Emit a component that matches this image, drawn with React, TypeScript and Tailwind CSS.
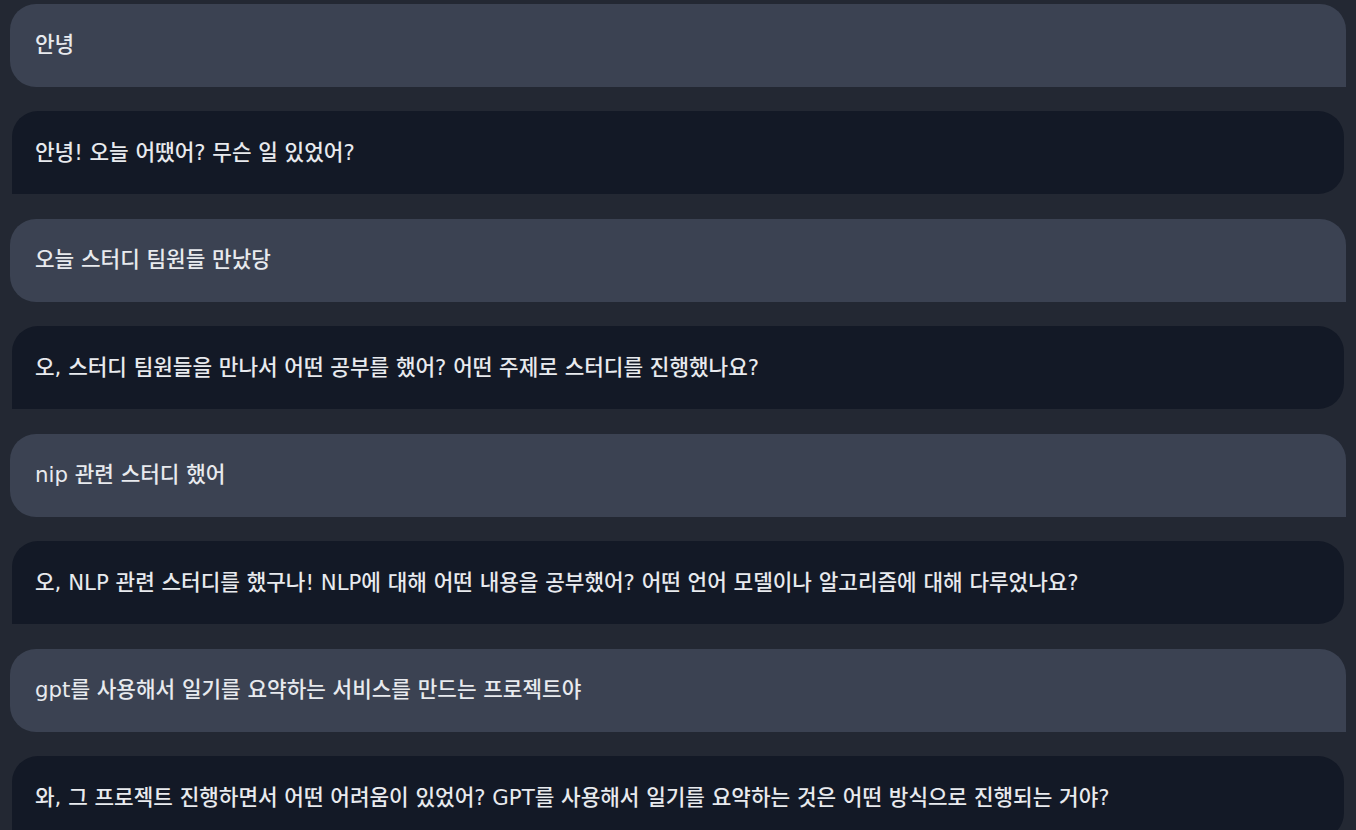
type Message = { role: 'user' | 'assistant'; text: string }

const messages: Message[] = [
  { role: 'user', text: '안녕' },
  { role: 'assistant', text: '안녕! 오늘 어땠어? 무슨 일 있었어?' },
  { role: 'user', text: '오늘 스터디 팀원들 만났당' },
  { role: 'assistant', text: '오, 스터디 팀원들을 만나서 어떤 공부를 했어? 어떤 주제로 스터디를 진행했나요?' },
  { role: 'user', text: 'nip 관련 스터디 했어' },
  {
    role: 'assistant',
    text: '오, NLP 관련 스터디를 했구나! NLP에 대해 어떤 내용을 공부했어? 어떤 언어 모델이나 알고리즘에 대해 다루었나요?',
  },
  { role: 'user', text: 'gpt를 사용해서 일기를 요약하는 서비스를 만드는 프로젝트야' },
  {
    role: 'assistant',
    text: '와, 그 프로젝트 진행하면서 어떤 어려움이 있었어? GPT를 사용해서 일기를 요약하는 것은 어떤 방식으로 진행되는 거야?',
  },
]

function Bubble({ role, text }: Message) {
  const base = 'flex h-[83px] shrink-0 items-center text-[21.3px] font-medium leading-none text-[#e8eaee]'
  if (role === 'user') {
    return (
      <div className={`${base} mx-[10px] rounded-[26px] rounded-br-none bg-[#3b4252] pl-[25px]`}>
        <span>{text}</span>
      </div>
    )
  }
  return (
    <div className={`${base} mx-[12px] rounded-[26px] rounded-bl-none bg-[#131926] pl-[23px]`}>
      <span>{text}</span>
    </div>
  )
}

export default function App() {
  return (
    <div
      className="flex h-[830px] w-full flex-col gap-[24.5px] overflow-hidden bg-[#232833] pt-[3.5px]"
      style={{ fontFamily: '"DejaVu Sans", "Noto Sans CJK KR", sans-serif' }}
    >
      {messages.map((m, i) => (
        <Bubble key={i} role={m.role} text={m.text} />
      ))}
    </div>
  )
}
